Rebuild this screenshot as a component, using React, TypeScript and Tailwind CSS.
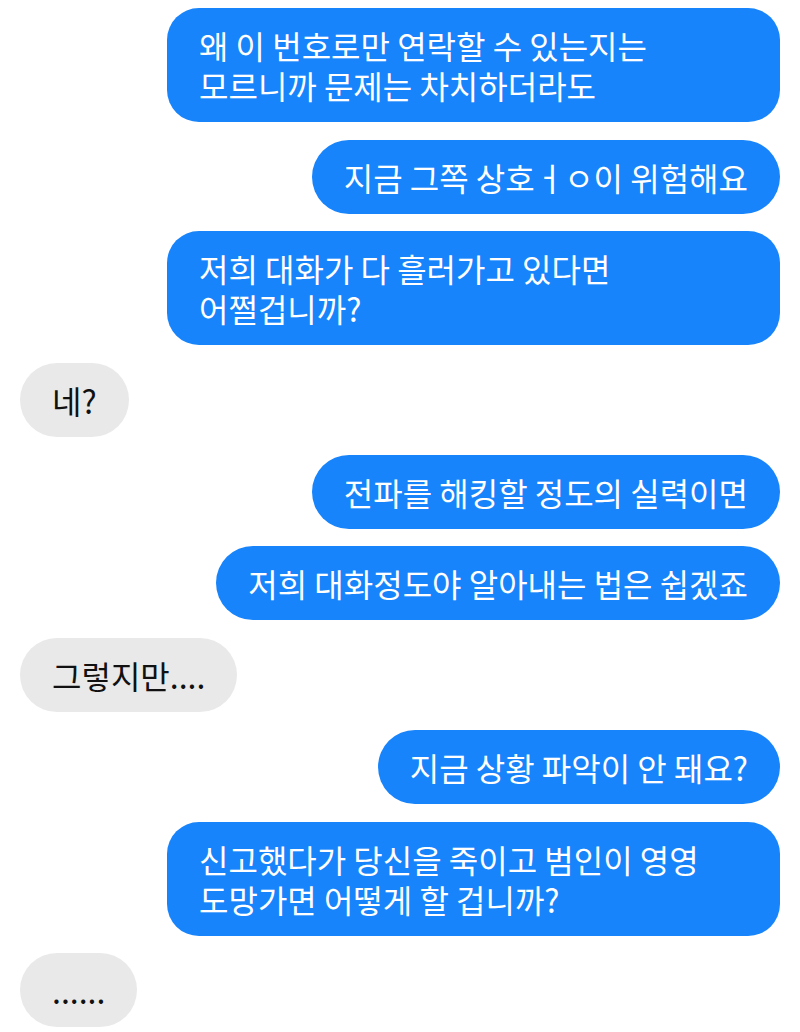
import React from "react";

type Msg = { me: boolean; lines: string[] };

const messages: Msg[] = [
  { me: true, lines: ["왜 이 번호로만 연락할 수 있는지는", "모르니까 문제는 차치하더라도"] },
  { me: true, lines: ["지금 그쪽 상호ㅓㅇ이 위험해요"] },
  { me: true, lines: ["저희 대화가 다 흘러가고 있다면", "어쩔겁니까?"] },
  { me: false, lines: ["네?"] },
  { me: true, lines: ["전파를 해킹할 정도의 실력이면"] },
  { me: true, lines: ["저희 대화정도야 알아내는 법은 쉽겠죠"] },
  { me: false, lines: ["그렇지만...."] },
  { me: true, lines: ["지금 상황 파악이 안 돼요?"] },
  { me: true, lines: ["신고했다가 당신을 죽이고 범인이 영영", "도망가면 어떻게 할 겁니까?"] },
  { me: false, lines: ["......"] },
];

function Bubble({ me, lines }: Msg) {
  const multi = lines.length > 1;
  return (
    <div className={me ? "flex justify-end" : "flex justify-start"}>
      <div
        className={[
          "px-8 py-[17px] text-[32px] leading-[40px] whitespace-nowrap",
          me ? "bg-[#1784fb] text-white" : "bg-[#e9e9e9] text-[#111111]",
          multi ? "w-[613px] rounded-[32px]" : "rounded-full",
        ].join(" ")}
      >
        {lines.map((l, i) => (
          <div key={i}>{l}</div>
        ))}
      </div>
    </div>
  );
}

export default function App() {
  return (
    <div
      className="w-[800px] h-[1032px] overflow-hidden bg-white px-5 pt-2 flex flex-col gap-[17.7px]"
      style={{ fontFamily: '"Noto Sans CJK KR", "Noto Sans", sans-serif' }}
    >
      {messages.map((m, i) => (
        <Bubble key={i} {...m} />
      ))}
    </div>
  );
}
